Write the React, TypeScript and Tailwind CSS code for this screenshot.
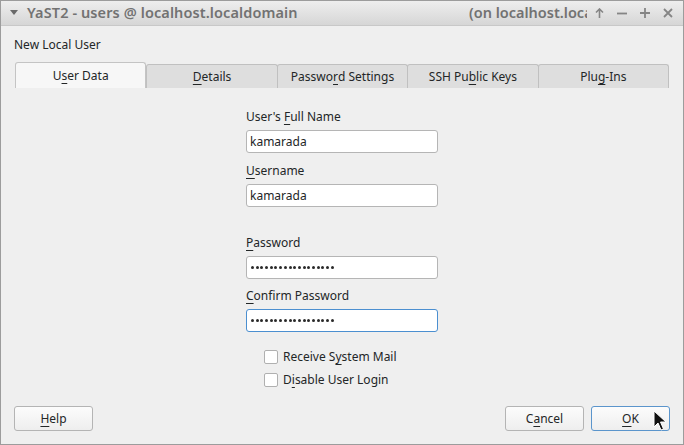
import React from 'react';

const font = { fontFamily: '"Noto Sans", "Open Sans", sans-serif' };

// mnemonic underline helper: splits label around the shortcut letter
const Mn: React.FC<{ text: string; at: number }> = ({ text, at }) => (
    <>
        {text.slice(0, at)}
        <span className="underline underline-offset-[3px] decoration-1">{text[at]}</span>
        {text.slice(at + 1)}
    </>
);

const tabs = [
    { text: 'User Data', at: 1 },
    { text: 'Details', at: 0 },
    { text: 'Password Settings', at: 6 },
    { text: 'SSH Public Keys', at: 6 },
    { text: 'Plug-Ins', at: 3 },
];

const dots = Array.from({ length: 18 });

const Field: React.FC<{ label: React.ReactNode; value?: string; secret?: boolean; focused?: boolean }> = ({ label, value, secret, focused }) => (
    <div className="flex flex-col">
        <div className="text-[12px] leading-[18px] text-[#232627] h-[18px]">{label}</div>
        <div className={`mt-[4px] w-[192px] h-[23px] bg-white rounded-[3px] border flex items-center px-[3px] ${focused ? 'border-[#4b8fd0]' : 'border-[#b5b5b5]'}`}>
            {secret ? (
                <div className="flex gap-[1.7px] ml-[1px]">
                    {dots.map((_, i) => <div key={i} className="w-[3px] h-[3px] rounded-full bg-[#2a2a2a]" />)}
                </div>
            ) : (
                <span className="text-[12px] text-[#232627]">{value}</span>
            )}
        </div>
    </div>
);

const Check: React.FC<{ children: React.ReactNode }> = ({ children }) => (
    <div className="flex items-center h-[23px]">
        <div className="w-[14px] h-[14px] bg-white border border-[#b0b0b0] rounded-[2px]" />
        <span className="ml-[5px] text-[12px] text-[#232627]">{children}</span>
    </div>
);

const Btn: React.FC<{ children: React.ReactNode; focused?: boolean }> = ({ children, focused }) => (
    <div className={`w-[79px] h-[25px] rounded-[3px] border flex items-center justify-center text-[12px] text-[#232627] bg-gradient-to-b from-[#fcfcfc] to-[#eeeeee] ${focused ? 'border-[#5b95cc]' : 'border-[#b4b4b4]'}`}>
        {children}
    </div>
);

export default function App() {
    return (
        <div style={font} className="relative w-[684px] h-[445px] bg-[#efefef] border border-[#9c9c9c] flex flex-col overflow-hidden">
            {/* title bar */}
            <div className="h-[25px] flex items-center bg-gradient-to-b from-[#eeeeee] to-[#d6d6d6] border-b border-[#c8c8c8] text-[#727272] shrink-0">
                <svg className="ml-[9px] w-[8px] h-[6px]" viewBox="0 0 8 6"><path d="M0 0 L8 0 L4 5 Z" fill="#6a6a6a" /></svg>
                <span className="ml-[9px] text-[14.5px] font-semibold tracking-[0.1px] whitespace-nowrap">YaST2 - users @ localhost.localdomain</span>
                <div className="ml-auto w-[118px] overflow-hidden whitespace-nowrap text-[14.5px] font-semibold">(on localhost.loca</div>
                <div className="flex items-center gap-[13px] ml-[8px] mr-[10px] text-[#858585]">
                    <svg className="w-[9px] h-[10px]" viewBox="0 0 9 10"><path d="M4.5 1 V10 M1 4.5 L4.5 1 L8 4.5" stroke="currentColor" strokeWidth="1.6" fill="none" /></svg>
                    <svg className="w-[10px] h-[10px]" viewBox="0 0 10 10"><path d="M0 5.5 H10" stroke="currentColor" strokeWidth="1.8" /></svg>
                    <svg className="w-[10px] h-[10px]" viewBox="0 0 10 10"><path d="M0 5 H10 M5 0 V10" stroke="currentColor" strokeWidth="1.8" /></svg>
                    <svg className="w-[10px] h-[10px]" viewBox="0 0 10 10"><path d="M1 1 L9 9 M9 1 L1 9" stroke="currentColor" strokeWidth="1.8" /></svg>
                </div>
            </div>

            <div className="flex-1 flex flex-col px-[13px] text-[#232627]">
                <div className="mt-[11px] text-[12px] leading-[16px]">New Local User</div>

                {/* tabs */}
                <div className="mt-[9px] flex items-end h-[26px] ml-[1px] mr-[1px]">
                    {tabs.map((t, i) => (
                        <div
                            key={t.text}
                            className={`flex-1 flex items-center justify-center text-[12px] border border-b-0 rounded-t-[3px] ${i === 0 ? 'h-[26px] bg-[#f7f7f7] border-[#c4c4c4]' : 'h-[24px] bg-[#dedede] border-[#c0c0c0] border-b'} ${i > 1 ? '-ml-px' : ''}`}
                        >
                            <Mn text={t.text} at={t.at} />
                        </div>
                    ))}
                </div>

                {/* form */}
                <div className="flex-1 flex flex-col items-start pl-[232px] pt-[20px]">
                    <Field label={<Mn text="User's Full Name" at={7} />} value="kamarada" />
                    <div className="mt-[9px]"><Field label={<Mn text="Username" at={0} />} value="kamarada" /></div>
                    <div className="mt-[27px]"><Field label={<Mn text="Password" at={0} />} secret /></div>
                    <div className="mt-[8px]"><Field label={<Mn text="Confirm Password" at={0} />} secret focused /></div>
                    <div className="mt-[13px] ml-[18px] flex flex-col">
                        <Check><Mn text="Receive System Mail" at={9} /></Check>
                        <Check><Mn text="Disable User Login" at={1} /></Check>
                    </div>
                </div>

                {/* buttons */}
                <div className="flex items-center mb-[13px]">
                    <Btn><Mn text="Help" at={0} /></Btn>
                    <div className="ml-auto flex gap-[7px]">
                        <Btn><Mn text="Cancel" at={1} /></Btn>
                        <Btn focused><Mn text="OK" at={0} /></Btn>
                    </div>
                </div>
            </div>

            {/* mouse pointer */}
            <svg className="absolute left-[652px] top-[409px] w-[14px] h-[22px]" viewBox="0 0 14 22">
                <path d="M1 1 L1 17 L5 13 L8 20 L10.5 19 L7.5 12 L13 12 Z" fill="#111" stroke="#fff" strokeWidth="1" strokeLinejoin="round" />
            </svg>
        </div>
    );
}
